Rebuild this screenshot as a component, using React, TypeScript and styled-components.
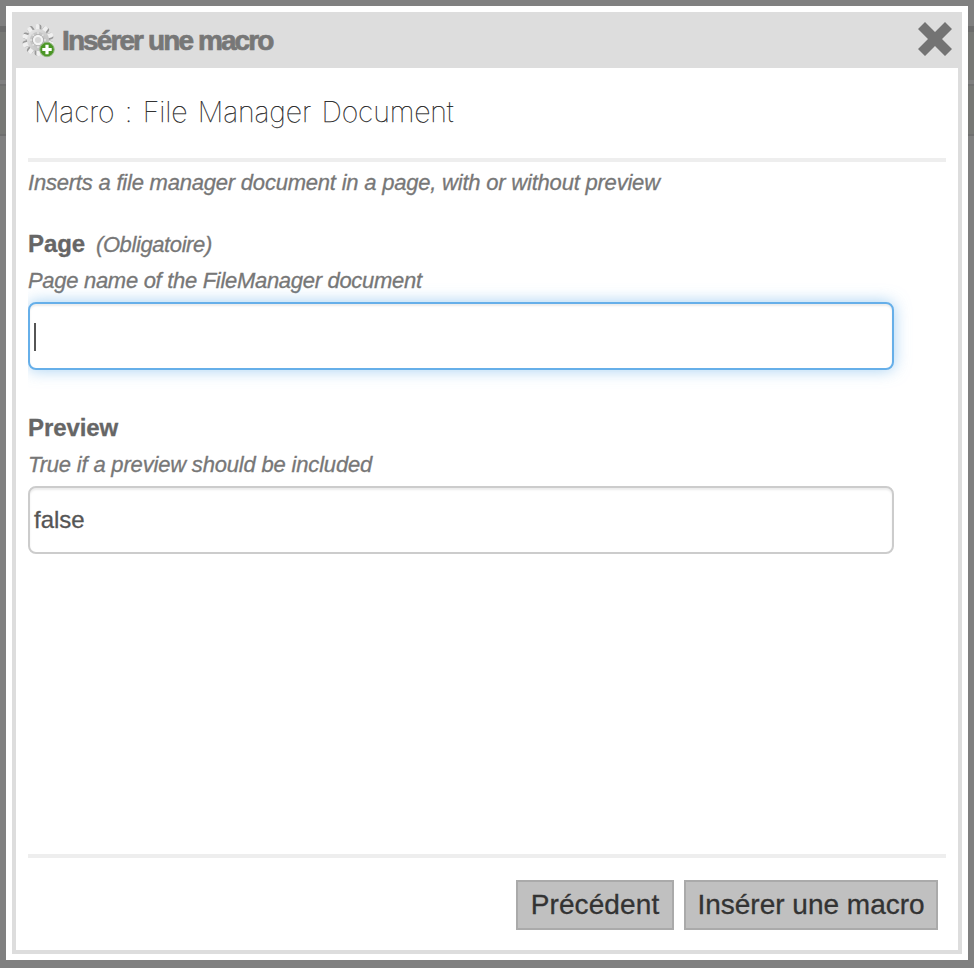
import React from 'react';
import styled, { createGlobalStyle } from 'styled-components';

const GlobalStyle = createGlobalStyle`
  *, *::before, *::after { box-sizing: border-box; }
  html, body { margin: 0; height: 968px; overflow: hidden; }
  body { font-family: "Liberation Sans", Arial, sans-serif; color: #666; -webkit-text-stroke: 0.3px; }
`;

const Backdrop = styled.div`
  display: flex;
  width: 974px;
  height: 968px;
  padding: 6px 6px 8px;
  background: linear-gradient(
    #808080 26px, #6c6c6c 26px 32px, #777875 32px 80px, #808080 80px 84px,
    #707070 84px 86px, #777875 86px 134px, #6f6f6f 134px 136px, #808080 136px
  );
`;

const Dialog = styled.div`
  flex: 1;
  display: flex;
  padding: 6px;
  background: #fff;
`;

const Frame = styled.div`
  flex: 1;
  display: flex;
  flex-direction: column;
  border: 4px solid #ddd;
`;

const Header = styled.header`
  display: flex;
  align-items: center;
  height: 52px;
  padding: 0 6px;
  background: #ddd;
`;

const HeaderTitle = styled.h1`
  flex: 1;
  margin: 0 0 0 6px;
  font-size: 28px;
  line-height: 50px;
  letter-spacing: -1.9px;
  color: #777;
  height: 52px;
  -webkit-text-stroke: 0.7px;
`;

const IconButton = styled.button`
  display: flex;
  margin: 0 0 6px;
  padding: 0;
  border: 0;
  background: none;
`;

const Body = styled.main`
  flex: 1;
  display: flex;
  flex-direction: column;
  padding: 0 12px;
`;

const MacroTitle = styled.h2`
  margin: 0;
  height: 90px;
  padding-left: 6px;
  font-family: Inter, "Liberation Sans", sans-serif;
  font-weight: 100;
  font-size: 28.5px;
  line-height: 88px;
  letter-spacing: -0.15px;
  word-spacing: 2.6px;
  color: #222;
  -webkit-text-stroke: 0.25px;
`;

const Rule = styled.hr`
  width: 100%;
  height: 4px;
  margin: 0;
  border: 0;
  background: #eee;
`;

const Hint = styled.p<{ $spacing: number }>`
  margin: 0;
  height: 36px;
  font-size: 22px;
  line-height: 42px;
  font-style: italic;
  letter-spacing: ${(p) => p.$spacing}px;
  color: #777;
`;

const FieldHint = styled(Hint)`
  line-height: 36px;
`;

const Fields = styled.div`
  flex: 1;
  margin-top: 28px;
  display: flex;
  flex-direction: column;
  gap: 40px;
`;

const Field = styled.label`
  display: flex;
  flex-direction: column;
  height: 144px;
`;

const LabelRow = styled.span`
  display: flex;
  align-items: baseline;
  gap: 11px;
  height: 37px;
  line-height: 36px;
`;

const LabelText = styled.strong<{ $spacing: number }>`
  font-size: 24px;
  letter-spacing: ${(p) => p.$spacing}px;
  color: #666;
`;

const Required = styled.em`
  font-size: 22px;
  letter-spacing: -0.4px;
  color: #777;
`;

const InputBox = styled.span<{ $focused?: boolean }>`
  display: flex;
  align-items: center;
  width: 866px;
  height: 68px;
  margin-top: 3px;
  padding: ${(p) => (p.$focused ? '2px 4px 0' : '0 4px')};
  border: 2px solid ${(p) => (p.$focused ? '#66afe9' : '#ccc')};
  border-radius: 8px;
  background: #fff;
  box-shadow: ${(p) =>
    p.$focused
      ? 'inset 0 2px 2px rgba(0,0,0,.075), 0 0 16px rgba(102,175,233,.6)'
      : 'inset 0 2px 2px rgba(0,0,0,.075)'};
  clip-path: inset(-30px -30px -30px 0);
  font-size: 24px;
  color: #555;
`;

const Caret = styled.i`
  width: 2px;
  height: 28px;
  background: #555;
`;

const Footer = styled.footer`
  display: flex;
  justify-content: flex-end;
  gap: 10px;
  height: 92px;
  padding: 22px 8px 0 0;
`;

const Button = styled.button<{ $width: number; $spacing: number }>`
  width: ${(p) => p.$width}px;
  height: 50px;
  padding: 0;
  border: 2px solid #aaa;
  background: #c0c0c0;
  font: 28px "Liberation Sans", Arial, sans-serif;
  letter-spacing: ${(p) => p.$spacing}px;
  white-space: nowrap;
  color: #333;
`;

const teeth = Array.from({ length: 10 }, (_, i) => i * 36);

function GearAddIcon() {
  return (
    <svg width="34" height="36" viewBox="0 0 34 36">
      <defs>
        <linearGradient id="gear" x1="0" y1="0" x2="1" y2="1">
          <stop offset="0" stopColor="#ececec" />
          <stop offset="1" stopColor="#b4b4b4" />
        </linearGradient>
      </defs>
      {teeth.map((a) => (
        <g key={a} transform={`rotate(${a} 16 16)`}>
          <rect x="13" y="0.4" width="6.4" height="8" rx="2" fill="#999" />
          <rect x="13.2" y="0" width="4.4" height="8" rx="1.8" fill="#efefef" />
        </g>
      ))}
      <circle cx="16" cy="16" r="11" fill="url(#gear)" />
      <circle cx="16" cy="16" r="8" fill="#c6c6c6" />
      <path d="M16 8v16M8 16h16M10.5 10.5l11 11M21.5 10.5l-11 11" stroke="#e2e2e2" strokeWidth="1.6" />
      <circle cx="16" cy="16" r="5.8" fill="#999" />
      <circle cx="16" cy="16" r="4.1" fill="#d6d6d6" stroke="#f4f4f4" strokeWidth="2.2" />
      <circle cx="25" cy="25.5" r="7.2" fill="#4b9625" stroke="#8fb57e" />
      <path d="M25 20.8v9.4M20.3 25.5h9.4" stroke="#fff" strokeWidth="3.2" />
    </svg>
  );
}

function CloseIcon() {
  return (
    <svg width="34" height="34" viewBox="0 0 34 34">
      <path
        d="M7 0L17 10L27 0L34 7L24 17L34 27L27 34L17 24L7 34L0 27L10 17L0 7Z"
        fill="#737373"
      />
    </svg>
  );
}

export default function App() {
  return (
    <>
      <GlobalStyle />
      <Backdrop>
        <Dialog role="dialog">
          <Frame>
            <Header>
              <GearAddIcon />
              <HeaderTitle>Insérer une macro</HeaderTitle>
              <IconButton aria-label="Fermer">
                <CloseIcon />
              </IconButton>
            </Header>
            <Body>
              <MacroTitle>Macro : File Manager Document</MacroTitle>
              <Rule />
              <Hint $spacing={-0.21}>Inserts a file manager document in a page, with or without preview</Hint>
              <Fields>
                <Field>
                  <LabelRow>
                    <LabelText $spacing={-0.1}>Page</LabelText>
                    <Required>(Obligatoire)</Required>
                  </LabelRow>
                  <FieldHint $spacing={-0.3}>Page name of the FileManager document</FieldHint>
                  <InputBox $focused>
                    <Caret />
                  </InputBox>
                </Field>
                <Field>
                  <LabelRow>
                    <LabelText $spacing={-0.1}>Preview</LabelText>
                  </LabelRow>
                  <FieldHint $spacing={-0.18}>True if a preview should be included</FieldHint>
                  <InputBox>false</InputBox>
                </Field>
              </Fields>
              <Rule />
              <Footer>
                <Button $width={158} $spacing={0.1}>Précédent</Button>
                <Button $width={254} $spacing={0}>Insérer une macro</Button>
              </Footer>
            </Body>
          </Frame>
        </Dialog>
      </Backdrop>
    </>
  );
}
